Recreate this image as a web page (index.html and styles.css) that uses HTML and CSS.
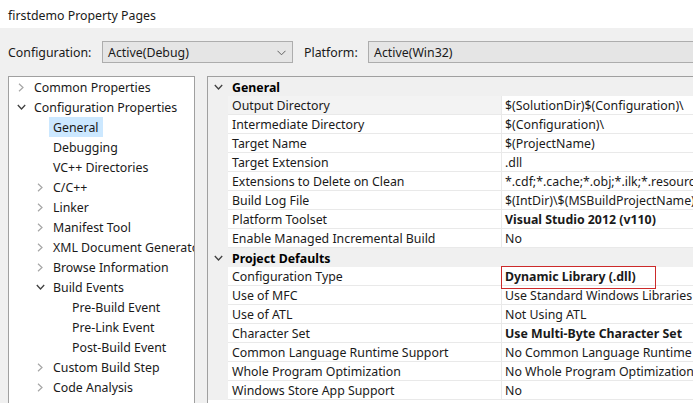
FILE: index.html
```html
<!DOCTYPE html>
<html>
<head>
<meta charset="utf-8">
<link rel="stylesheet" href="styles.css">
</head>
<body>
<div class="window">
  <div class="titlebar">firstdemo Property Pages</div>
  <div class="toolbar">
    <span class="label">Configuration:</span>
    <div class="combo combo-config"><span>Active(Debug)</span>
      <svg class="combo-arrow" width="9" height="6" viewBox="0 0 9 6"><path d="M0.5 0.8 L4.5 4.8 L8.5 0.8" fill="none" stroke="#606060" stroke-width="1"/></svg>
    </div>
    <span class="label label-platform">Platform:</span>
    <div class="combo combo-platform"><span>Active(Win32)</span></div>
  </div>
  <div class="panels">
    <div class="tree">
      <div class="node l0"><span class="chev"><svg width="6" height="9" viewBox="0 0 6 9"><path d="M1 0.8 L5 4.5 L1 8.2" fill="none" stroke="#a6a6a6" stroke-width="1.2"/></svg></span><span class="txt">Common Properties</span></div>
      <div class="node l0"><span class="chev"><svg width="9" height="6" viewBox="0 0 9 6"><path d="M0.8 1 L4.5 5 L8.2 1" fill="none" stroke="#404040" stroke-width="1.3"/></svg></span><span class="txt">Configuration Properties</span></div>
      <div class="node l1"><span class="chev"></span><span class="txt sel">General</span></div>
      <div class="node l1"><span class="chev"></span><span class="txt">Debugging</span></div>
      <div class="node l1"><span class="chev"></span><span class="txt">VC++ Directories</span></div>
      <div class="node l1"><span class="chev"><svg width="6" height="9" viewBox="0 0 6 9"><path d="M1 0.8 L5 4.5 L1 8.2" fill="none" stroke="#a6a6a6" stroke-width="1.2"/></svg></span><span class="txt">C/C++</span></div>
      <div class="node l1"><span class="chev"><svg width="6" height="9" viewBox="0 0 6 9"><path d="M1 0.8 L5 4.5 L1 8.2" fill="none" stroke="#a6a6a6" stroke-width="1.2"/></svg></span><span class="txt">Linker</span></div>
      <div class="node l1"><span class="chev"><svg width="6" height="9" viewBox="0 0 6 9"><path d="M1 0.8 L5 4.5 L1 8.2" fill="none" stroke="#a6a6a6" stroke-width="1.2"/></svg></span><span class="txt">Manifest Tool</span></div>
      <div class="node l1"><span class="chev"><svg width="6" height="9" viewBox="0 0 6 9"><path d="M1 0.8 L5 4.5 L1 8.2" fill="none" stroke="#a6a6a6" stroke-width="1.2"/></svg></span><span class="txt">XML Document Generator</span></div>
      <div class="node l1"><span class="chev"><svg width="6" height="9" viewBox="0 0 6 9"><path d="M1 0.8 L5 4.5 L1 8.2" fill="none" stroke="#a6a6a6" stroke-width="1.2"/></svg></span><span class="txt">Browse Information</span></div>
      <div class="node l1"><span class="chev"><svg width="9" height="6" viewBox="0 0 9 6"><path d="M0.8 1 L4.5 5 L8.2 1" fill="none" stroke="#404040" stroke-width="1.3"/></svg></span><span class="txt">Build Events</span></div>
      <div class="node l2"><span class="chev"></span><span class="txt">Pre-Build Event</span></div>
      <div class="node l2"><span class="chev"></span><span class="txt">Pre-Link Event</span></div>
      <div class="node l2"><span class="chev"></span><span class="txt">Post-Build Event</span></div>
      <div class="node l1"><span class="chev"><svg width="6" height="9" viewBox="0 0 6 9"><path d="M1 0.8 L5 4.5 L1 8.2" fill="none" stroke="#a6a6a6" stroke-width="1.2"/></svg></span><span class="txt">Custom Build Step</span></div>
      <div class="node l1"><span class="chev"><svg width="6" height="9" viewBox="0 0 6 9"><path d="M1 0.8 L5 4.5 L1 8.2" fill="none" stroke="#a6a6a6" stroke-width="1.2"/></svg></span><span class="txt">Code Analysis</span></div>
    </div>
    <div class="grid">
      <div class="row cat"><span class="gut"><svg width="9" height="6" viewBox="0 0 9 6"><path d="M0.8 1 L4.5 5 L8.2 1" fill="none" stroke="#404040" stroke-width="1.3"/></svg></span><span class="catname">General</span></div>
      <div class="row sel"><span class="gut"></span><span class="name">Output Directory</span><span class="val">$(SolutionDir)$(Configuration)\</span></div>
      <div class="row"><span class="gut"></span><span class="name">Intermediate Directory</span><span class="val">$(Configuration)\</span></div>
      <div class="row"><span class="gut"></span><span class="name">Target Name</span><span class="val">$(ProjectName)</span></div>
      <div class="row"><span class="gut"></span><span class="name">Target Extension</span><span class="val">.dll</span></div>
      <div class="row"><span class="gut"></span><span class="name">Extensions to Delete on Clean</span><span class="val">*.cdf;*.cache;*.obj;*.ilk;*.resources;*.tlb;*.tli;*.tlh;*.tmp</span></div>
      <div class="row"><span class="gut"></span><span class="name">Build Log File</span><span class="val">$(IntDir)\$(MSBuildProjectName).log</span></div>
      <div class="row"><span class="gut"></span><span class="name">Platform Toolset</span><span class="val b">Visual Studio 2012 (v110)</span></div>
      <div class="row"><span class="gut"></span><span class="name">Enable Managed Incremental Build</span><span class="val">No</span></div>
      <div class="row cat"><span class="gut"><svg width="9" height="6" viewBox="0 0 9 6"><path d="M0.8 1 L4.5 5 L8.2 1" fill="none" stroke="#404040" stroke-width="1.3"/></svg></span><span class="catname">Project Defaults</span></div>
      <div class="row"><span class="gut"></span><span class="name">Configuration Type</span><span class="val b"><span class="mark">Dynamic Library (.dll)</span></span></div>
      <div class="row"><span class="gut"></span><span class="name">Use of MFC</span><span class="val">Use Standard Windows Libraries</span></div>
      <div class="row"><span class="gut"></span><span class="name">Use of ATL</span><span class="val">Not Using ATL</span></div>
      <div class="row"><span class="gut"></span><span class="name">Character Set</span><span class="val b">Use Multi-Byte Character Set</span></div>
      <div class="row"><span class="gut"></span><span class="name">Common Language Runtime Support</span><span class="val">No Common Language Runtime Support</span></div>
      <div class="row"><span class="gut"></span><span class="name">Whole Program Optimization</span><span class="val">No Whole Program Optimization</span></div>
      <div class="row"><span class="gut"></span><span class="name">Windows Store App Support</span><span class="val">No</span></div>
    </div>
  </div>
</div>
</body>
</html>
```
FILE: styles.css
```css
* { box-sizing: border-box; }
html, body { margin: 0; padding: 0; }
body {
  width: 693px;
  height: 403px;
  overflow: hidden;
  background: #f0f0f0;
  font-family: "Noto Sans", "Liberation Sans", sans-serif;
  font-size: 12.35px;
  color: #000;
}
.window { width: 693px; height: 403px; overflow: hidden; }
.titlebar {
  height: 28px;
  background: #fff;
  padding-left: 8px;
  padding-top: 2px;
  display: flex;
  align-items: center;
  color: #1a1a1a;
}
.toolbar {
  display: flex;
  align-items: flex-start;
  padding: 13px 0 0 8px;
  height: 48px;
  white-space: nowrap;
}
.toolbar .label { width: 94px; flex: none; line-height: 22px; padding-top: 1px; color: #1a1a1a; }
.toolbar .label-platform { width: 64px; margin-left: 11px; }
.combo {
  height: 22px;
  background: #e5e5e5;
  border: 1px solid #adadad;
  display: flex;
  align-items: center;
  padding-left: 5px;
  padding-top: 1px;
  flex: none;
  color: #1a1a1a;
}
.combo-config { width: 191px; justify-content: space-between; padding-right: 6px; }
.combo-platform { width: 340px; }
.combo-arrow { display: block; }
.panels {
  display: flex;
  padding-left: 8px;
  gap: 12px;
  align-items: flex-start;
}
.tree {
  width: 187px;
  height: 340px;
  flex: none;
  background: #fff;
  border: 1px solid #a0a0a0;
  overflow: hidden;
  white-space: nowrap;
}
.node {
  height: 20px;
  display: flex;
  align-items: center;
  color: #1a1a1a;
}
.node.l0 { padding-left: 2px; }
.node.l1 { padding-left: 21px; }
.node.l2 { padding-left: 40px; }
.chev {
  width: 20px;
  height: 20px;
  flex: none;
  display: flex;
  align-items: center;
  justify-content: center;
}
.chev svg { display: block; }
.txt { padding: 1px 4px 0; margin-left: -1px; height: 20px; line-height: 20px; }
.txt.sel { background: #cce8ff; }
.grid {
  flex: 1;
  min-width: 500px;
  height: 340px;
  background: #fff;
  border: 1px solid #a0a0a0;
  overflow: hidden;
  white-space: nowrap;
}
.row {
  height: 19px;
  display: flex;
  align-items: stretch;
}
.row .gut {
  width: 20px;
  flex: none;
  background: #f0f0f0;
  display: flex;
  align-items: center;
  justify-content: center;
}
.row .name {
  width: 274px;
  flex: none;
  padding-left: 4px;
  padding-top: 1px;
  line-height: 18px;
  border-bottom: 1px solid #e9e9e9;
  border-right: 1px solid #e9e9e9;
  color: #1a1a1a;
}
.row .val {
  flex: 1;
  padding-left: 3px;
  padding-top: 1px;
  line-height: 18px;
  border-bottom: 1px solid #e9e9e9;
  color: #1a1a1a;
}
.row.sel .name { background: #f3f3f3; }
.row.cat { background: #f0f0f0; }
.row.cat .catname {
  padding-left: 4px;
  padding-top: 1px;
  font-weight: bold;
  line-height: 19px;
}
.b { font-weight: bold; }
.mark {
  display: inline-block;
  position: relative;
  height: 18px;
  vertical-align: top;
}
.mark::after {
  content: "";
  position: absolute;
  left: -4px;
  top: -2px;
  width: 153px;
  height: 21px;
  border: 1.5px solid #cc2a2a;
}
```
